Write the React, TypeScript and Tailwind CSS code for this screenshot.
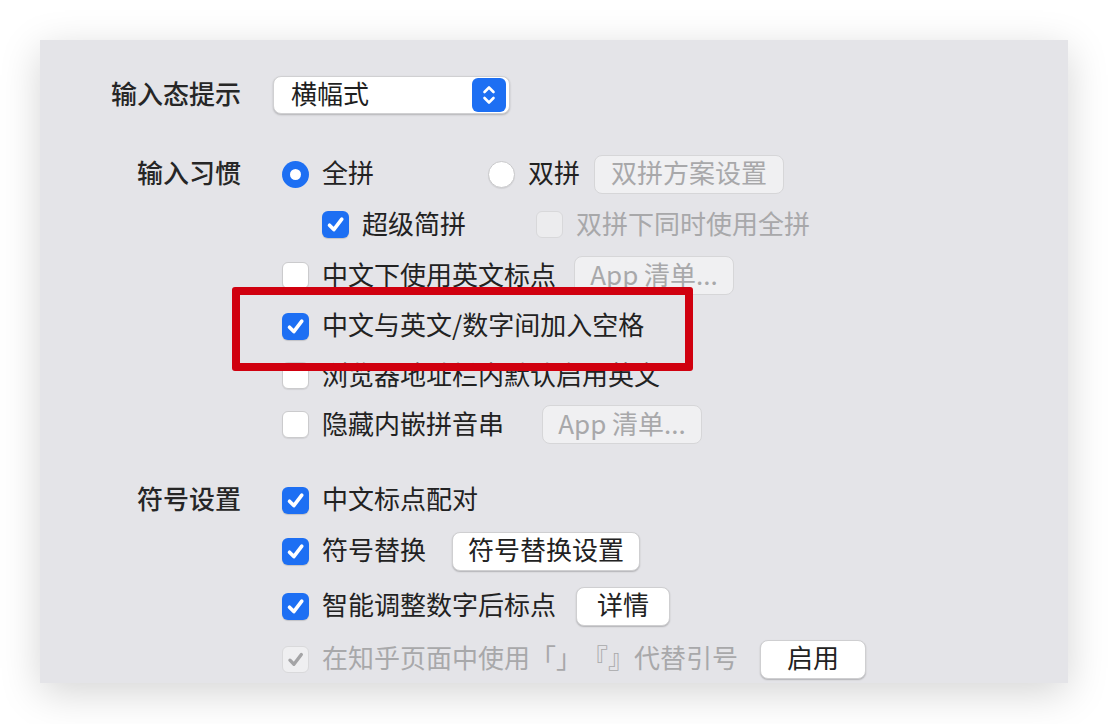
import React from "react";

const font = "font-['Noto_Sans_CJK_SC','Noto_Sans',sans-serif] [text-spacing-trim:space-all]";

function CheckMark({ color }: { color: string }) {
  return (
    <svg width="27" height="27" viewBox="0 0 27 27" fill="none">
      <path
        d="M7.5 14.2 L11.8 18.6 L19.8 8.2"
        stroke={color}
        strokeWidth="3.6"
        strokeLinecap="round"
        strokeLinejoin="round"
      />
    </svg>
  );
}

function Checkbox({ checked = false, disabled = false }: { checked?: boolean; disabled?: boolean }) {
  if (checked && !disabled) {
    return (
      <span className="flex h-[27px] w-[27px] shrink-0 items-center justify-center rounded-[6px] bg-[#1d6ff3] shadow-[0_1px_1px_rgba(0,0,0,0.15)]">
        <CheckMark color="#ffffff" />
      </span>
    );
  }
  if (checked && disabled) {
    return (
      <span className="flex h-[27px] w-[27px] shrink-0 items-center justify-center rounded-[6px] border border-[#d9d9db] bg-[#efeff1]">
        <CheckMark color="#a4a4a6" />
      </span>
    );
  }
  return (
    <span
      className={
        disabled
          ? "h-[27px] w-[27px] shrink-0 rounded-[6px] border border-[#d8d8da] bg-[#ececee]"
          : "h-[27px] w-[27px] shrink-0 rounded-[6px] border border-[#cbcbcd] bg-white shadow-[0_1px_1px_rgba(0,0,0,0.08)]"
      }
    />
  );
}

function Radio({ checked = false }: { checked?: boolean }) {
  return checked ? (
    <span className="flex h-[27px] w-[27px] shrink-0 items-center justify-center rounded-full bg-[#1d6ff3]">
      <span className="h-[11px] w-[11px] rounded-full bg-white" />
    </span>
  ) : (
    <span className="h-[27px] w-[27px] shrink-0 rounded-full border border-[#c9c9cb] bg-white shadow-[0_1px_1px_rgba(0,0,0,0.08)]" />
  );
}

// nudges CJK glyphs up so they sit centred like the macOS rendering
function T({ children }: { children: React.ReactNode }) {
  return <span className="relative -top-[2px]">{children}</span>;
}

function Button({
  children,
  width,
  disabled = false,
  className = "",
}: {
  children: React.ReactNode;
  width: string;
  disabled?: boolean;
  className?: string;
}) {
  return (
    <span
      className={
        (disabled
          ? "border-[#d6d6d8] bg-[#f0f0f2] text-[#a8a8aa] "
          : "border-[#cfcfd1] bg-white text-[#222222] shadow-[0_1px_1.5px_rgba(0,0,0,0.22)] ") +
        "flex h-[39px] shrink-0 items-center justify-center rounded-[8px] border-[0.5px] text-[26px] leading-none " +
        width +
        " " +
        className
      }
    >
      <T>{children}</T>
    </span>
  );
}

function Label({ children }: { children?: React.ReactNode }) {
  return (
    <div className="w-[201px] shrink-0 text-right text-[26px] font-medium leading-none text-[#262626]">
      {children && <T>{children}</T>}
    </div>
  );
}

export default function App() {
  return (
    <div className={"min-h-[724px] bg-white px-[40px] pt-[40px] pb-[41px] " + font}>
      <div className="relative h-[643px] w-[1028px] bg-[#e4e4e8] pt-[36px] shadow-[0_10px_38px_rgba(0,0,0,0.17)]">
        {/* 输入态提示 */}
        <div className="flex h-[38px] items-center">
          <Label>输入态提示</Label>
          <div className="ml-[32px] flex h-[38px] w-[237px] items-center justify-between rounded-[8px] border-[0.5px] border-[#d0d0d2] bg-white pr-[3px] pl-[17px] shadow-[0_1px_2px_rgba(0,0,0,0.22)]">
            <span className="text-[26px] leading-none text-[#1f1f1f]">
              <T>横幅式</T>
            </span>
            <span className="flex h-[34px] w-[34px] items-center justify-center rounded-[6px] bg-[#1d6ff3]">
              <svg width="16" height="24" viewBox="0 0 16 24" fill="none">
                <path d="M3.5 9 L8 4.5 L12.5 9" stroke="white" strokeWidth="2.6" strokeLinecap="round" strokeLinejoin="round" />
                <path d="M3.5 15 L8 19.5 L12.5 15" stroke="white" strokeWidth="2.6" strokeLinecap="round" strokeLinejoin="round" />
              </svg>
            </span>
          </div>
        </div>

        {/* 输入习惯 */}
        <div className="mt-[35px] flex h-[50px] items-center">
          <Label>输入习惯</Label>
          <div className="ml-[41px] flex items-center text-[26px] leading-none text-[#222222]">
            <div className="flex w-[206px] items-center gap-[13px]">
              <Radio checked />
              <T>全拼</T>
            </div>
            <div className="flex items-center gap-[13px]">
              <Radio />
              <T>双拼</T>
            </div>
            <Button width="w-[190px]" disabled className="ml-[14px]">
              双拼方案设置
            </Button>
          </div>
        </div>

        <div className="flex h-[51px] items-center">
          <Label />
          <div className="ml-[81px] flex items-center text-[26px] leading-none">
            <div className="flex w-[214px] items-center gap-[13px] text-[#222222]">
              <Checkbox checked />
              <T>超级简拼</T>
            </div>
            <div className="flex items-center gap-[13px] text-[#a8a8aa]">
              <Checkbox disabled />
              <T>双拼下同时使用全拼</T>
            </div>
          </div>
        </div>

        <div className="flex h-[51px] items-center">
          <Label />
          <div className="ml-[41px] flex items-center gap-[13px] text-[26px] leading-none text-[#222222]">
            <Checkbox />
            <T>中文下使用英文标点</T>
            <Button width="w-[160px]" disabled className="ml-[5px]">
              App 清单...
            </Button>
          </div>
        </div>

        <div className="flex h-[50px] items-center">
          <Label />
          <div className="ml-[41px] flex items-center gap-[13px] text-[26px] leading-none text-[#222222]">
            <Checkbox checked />
            <T>中文与英文/数字间加入空格</T>
          </div>
        </div>

        <div className="flex h-[49px] items-center">
          <Label />
          <div className="ml-[41px] flex items-center gap-[13px] text-[26px] leading-none text-[#222222]">
            <Checkbox />
            <T>浏览器地址栏内默认启用英文</T>
          </div>
        </div>

        <div className="flex h-[49px] items-center">
          <Label />
          <div className="ml-[41px] flex items-center gap-[13px] text-[26px] leading-none text-[#222222]">
            <Checkbox />
            <T>隐藏内嵌拼音串</T>
            <Button width="w-[160px]" disabled className="ml-[25px]">
              App 清单...
            </Button>
          </div>
        </div>

        {/* 符号设置 */}
        <div className="mt-[26px] flex h-[50px] items-center">
          <Label>符号设置</Label>
          <div className="ml-[41px] flex items-center gap-[13px] text-[26px] leading-none text-[#222222]">
            <Checkbox checked />
            <T>中文标点配对</T>
          </div>
        </div>

        <div className="flex h-[52px] items-center">
          <Label />
          <div className="ml-[41px] flex items-center gap-[13px] text-[26px] leading-none text-[#222222]">
            <Checkbox checked />
            <T>符号替换</T>
            <Button width="w-[188px]" className="ml-[13px]">
              符号替换设置
            </Button>
          </div>
        </div>

        <div className="flex h-[58px] items-center">
          <Label />
          <div className="ml-[41px] flex items-center gap-[13px] text-[26px] leading-none text-[#222222]">
            <Checkbox checked />
            <T>智能调整数字后标点</T>
            <Button width="w-[94px]" className="ml-[7px]">
              详情
            </Button>
          </div>
        </div>

        <div className="flex h-[48px] items-center">
          <Label />
          <div className="ml-[41px] flex items-center gap-[13px] text-[26px] leading-none text-[#a8a8aa]">
            <Checkbox checked disabled />
            <T>在知乎页面中使用「」『』代替引号</T>
            <Button width="w-[106px]" className="ml-[9px]">
              启用
            </Button>
          </div>
        </div>

        {/* highlight */}
        <div className="absolute top-[247px] left-[192px] h-[84px] w-[461px] rounded-[3px] border-[8px] border-[#d0000f]" />
      </div>
    </div>
  );
}
